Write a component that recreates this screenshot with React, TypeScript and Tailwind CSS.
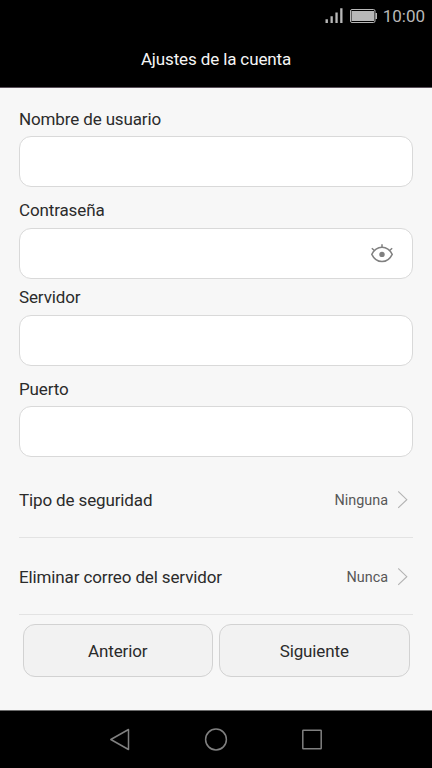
import { useState } from 'react';

interface FieldProps {
  label: string;
  className: string;
  labelClassName: string;
  secret?: boolean;
}

function EyeIcon() {
  return (
    <svg width="22" height="20" viewBox="0 0 22 20" fill="none" stroke="#808080" strokeWidth="1.5">
      <path d="M.8 10.400C2.800 6.200 6.600 3.200 11 3.200s8.200 3 10.200 7.200c-2 4.200-5.800 7.200-10.200 7.200S2.800 14.600.8 10.400Z" />
      <path d="M11 .2v3M.8 4.200l2.900 2.500M21.200 4.200l-2.900 2.500" />
      <circle cx="11" cy="10.400" r="2.700" fill="#808080" stroke="none" />
    </svg>
  );
}

function Field({ label, className, labelClassName, secret }: FieldProps) {
  const [visible, setVisible] = useState(false);

  return (
    <label className={`block ${className}`}>
      <span className={`block leading-5 ${labelClassName}`}>{label}</span>
      <div className="flex h-[51px] items-center rounded-xl border border-[#d9d9d9] bg-white pl-4 pr-[19px]">
        <input
          type={secret && !visible ? 'password' : 'text'}
          className="min-w-0 flex-1 bg-transparent outline-none"
        />
        {secret && (
          <button type="button" onClick={() => setVisible(!visible)}>
            <EyeIcon />
          </button>
        )}
      </div>
    </label>
  );
}

function OptionRow({ label, value }: { label: string; value: string }) {
  return (
    <div className="flex h-[77px] items-center justify-between border-b border-[#e3e3e3] pr-[5px] pt-[3px]">
      <span>{label}</span>
      <div className="flex items-center gap-2.5">
        <span className="text-[14.4px] tracking-normal text-[#585858]">{value}</span>
        <svg width="10" height="18" viewBox="0 0 10 18" fill="none" stroke="#b3b3b3" strokeWidth="1.1">
          <path d="M.2.5 8.800 8.700.2 16.900" />
        </svg>
      </div>
    </div>
  );
}

function StatusBar() {
  return (
    <div className="flex h-8 items-center justify-end pr-[7px] text-[#b8b8b8]">
      <svg width="18" height="16" viewBox="0 0 18 16" fill="currentColor">
        <path d="M.5 11.300h2.400V15H.5zM5.500 8.300h2.300V15H5.500zM10.400 4.500h2.300V15h-2.300zM15.200.3h2.300V15h-2.300z" />
      </svg>
      <svg className="ml-[7px]" width="27" height="14" viewBox="0 0 27 14" fill="currentColor">
        <rect x=".5" y=".5" width="24.500" height="13" rx="1.500" fill="none" stroke="currentColor" />
        <rect x="1.500" y="2" width="22.500" height="10" />
        <rect x="25.500" y="4" width="1.500" height="6" />
      </svg>
      <span className="ml-1.5 text-[17px] leading-5 tracking-normal">10:00</span>
    </div>
  );
}

function NavBar() {
  return (
    <div className="flex h-[58px] items-center justify-center gap-[72px] border-t border-[#6b6b6b] bg-black text-[#808080]">
      <svg width="24" height="24" viewBox="0 0 24 24" fill="none" stroke="currentColor" strokeWidth="1.500" strokeLinejoin="round">
        <path d="M2.800 11.500 20.500 1.500v20Z" />
      </svg>
      <svg width="24" height="24" viewBox="0 0 24 24" fill="none" stroke="currentColor" strokeWidth="1.500">
        <circle cx="12" cy="11.500" r="10.400" />
      </svg>
      <svg width="24" height="24" viewBox="0 0 24 24" fill="none" stroke="currentColor" strokeWidth="1.500">
        <rect x="2.800" y="2.300" width="18.400" height="18.400" rx=".5" />
      </svg>
    </div>
  );
}

export default function App() {
  return (
    <div className="flex h-[768px] w-[432px] flex-col overflow-hidden bg-[#f7f7f7] font-['Roboto',sans-serif] text-[17px] tracking-[-0.13px] text-[#2b2b2b]">
      <header className="h-[88px] border-b border-[#5a505a] bg-black">
        <StatusBar />
        <h1 className="pt-[17px] text-center leading-5 text-[#f5f5f5]">Ajustes de la cuenta</h1>
      </header>

      <main className="flex-1 px-[19px] pt-[21px]">
        <Field label="Nombre de usuario" className="mb-[13px]" labelClassName="mb-[7px]" />
        <Field label="Contraseña" className="mb-[8px]" labelClassName="mb-2" secret />
        <Field label="Servidor" className="mb-[13px]" labelClassName="mb-2" />
        <Field label="Puerto" className="mb-[4px]" labelClassName="mb-[7px]" />

        <OptionRow label="Tipo de seguridad" value="Ninguna" />
        <OptionRow label="Eliminar correo del servidor" value="Nunca" />

        <div className="mt-[9px] flex gap-1.5 px-[3.500px]">
          <button className="h-[53px] flex-1 rounded-xl border border-[#d2d2d2] bg-[#f2f2f2] pt-0.5">Anterior</button>
          <button className="h-[53px] flex-1 rounded-xl border border-[#d2d2d2] bg-[#f2f2f2] pt-0.5">Siguiente</button>
        </div>
      </main>

      <NavBar />
    </div>
  );
}
